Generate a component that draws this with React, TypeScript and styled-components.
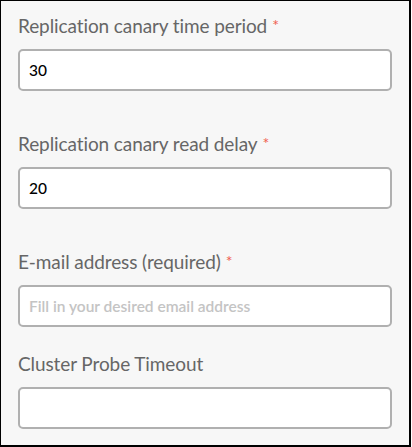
import React from "react";
import styled, { createGlobalStyle } from "styled-components";

const Global = createGlobalStyle`
  html, body { margin: 0; padding: 0; background: #ffffff; }
  #root { width: 412px; height: 447px; }
`;

const Panel = styled.div`
  box-sizing: border-box;
  width: 411px;
  height: 447px;
  background: #f7f7f7;
  border-style: solid;
  border-color: #000;
  border-width: 1px 2px 2px 1px;
  padding: 11px 17px 0 17px;
  display: flex;
  flex-direction: column;
  font-family: Lato, "Open Sans", sans-serif;
`;

const Field = styled.div<{ $gap: number }>`
  display: flex;
  flex-direction: column;
  margin-bottom: ${(p) => p.$gap}px;
`;

const Label = styled.label`
  font-size: 19px;
  line-height: 26px;
  color: #666666;
  margin-bottom: 10px;
  letter-spacing: -0.1px;
`;

const Star = styled.span`
  color: #f0604f;
  font-size: 16px;
  margin-left: 5px;
  vertical-align: 2px;
`;

const Input = styled.input`
  box-sizing: border-box;
  width: 374px;
  height: 42px;
  border: 2px solid #b0b0b0;
  border-radius: 5px;
  background: #ffffff;
  padding: 0 9px;
  font-family: Lato, "Open Sans", sans-serif;
  font-size: 15.5px;
  font-weight: 500;
  color: #000;
  outline: none;
  &::placeholder {
    color: #c4c4c4;
    font-weight: 600;
  }
`;

export default function App() {
  return (
    <>
      <Global />
      <Panel>
        <Field $gap={39}>
          <Label>
            Replication canary time period<Star>*</Star>
          </Label>
          <Input defaultValue="30" />
        </Field>
        <Field $gap={39}>
          <Label>
            Replication canary read delay<Star>*</Star>
          </Label>
          <Input defaultValue="20" />
        </Field>
        <Field $gap={24}>
          <Label>
            E-mail address (required)<Star>*</Star>
          </Label>
          <Input placeholder="Fill in your desired email address" />
        </Field>
        <Field $gap={0}>
          <Label>Cluster Probe Timeout</Label>
          <Input />
        </Field>
      </Panel>
    </>
  );
}
